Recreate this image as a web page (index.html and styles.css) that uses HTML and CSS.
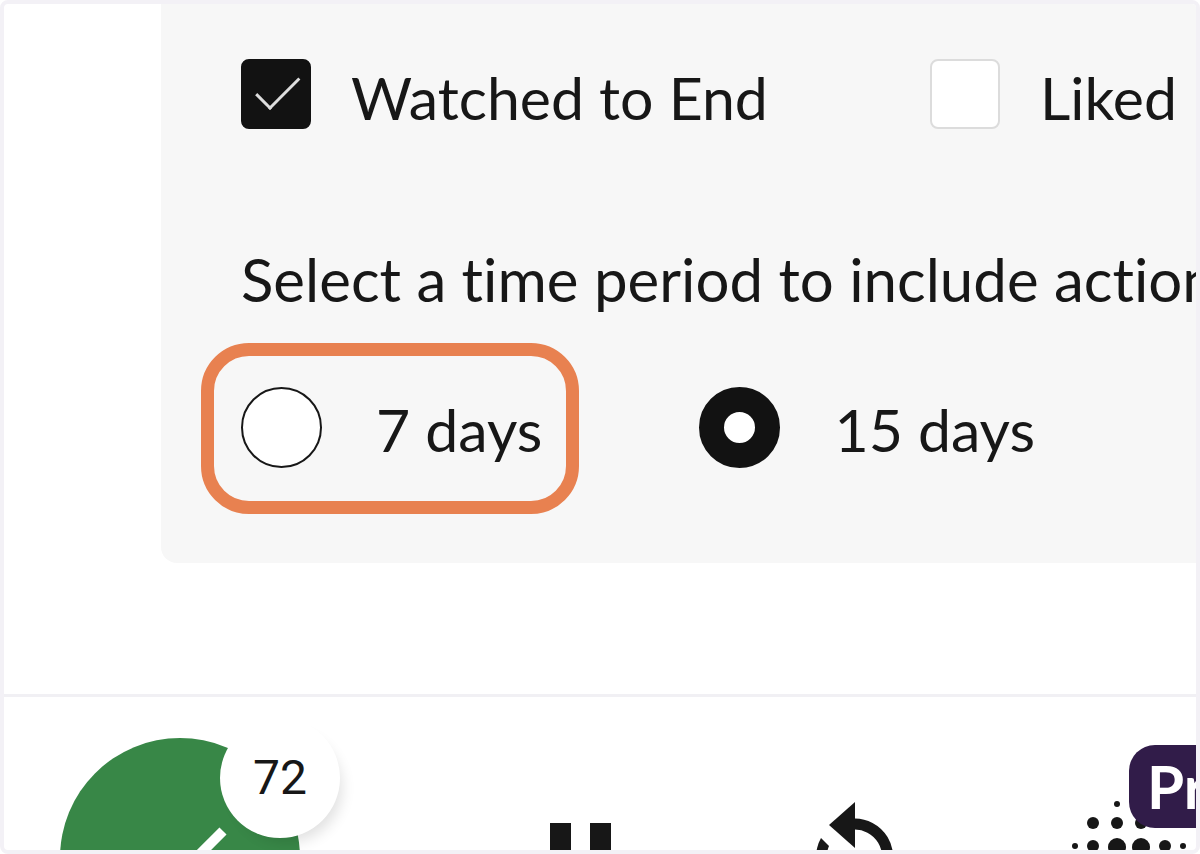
FILE: index.html
```html
<!doctype html>
<html lang="en">
<head>
  <meta charset="UTF-8">
  <meta name="viewport" content="width=device-width, initial-scale=1">
  <title>Time period</title>
  <link rel="stylesheet" href="styles.css">
</head>
<body>
  <div class="frame">
    <form class="panel">
      <div class="actions">
        <label class="option"><input type="checkbox" class="check" checked>Watched to End</label>
        <label class="option"><input type="checkbox" class="check">Liked</label>
      </div>
      <fieldset class="period">
        <legend>Select a time period to include action</legend>
        <div class="days">
          <label class="option day marked"><input type="radio" name="days" class="radio">7 days</label>
          <label class="option day"><input type="radio" name="days" class="radio" checked>15 days</label>
        </div>
      </fieldset>
    </form>

    <div class="toolbar">
      <button type="button" class="tool score">
        <svg viewBox="0 0 240 240">
          <path d="M163 93L105 151L80 126" fill="none" stroke="#fff" stroke-width="10"/>
        </svg>
        <span class="count">72</span>
      </button>
      <button type="button" class="tool">
        <svg viewBox="0 0 240 240">
          <path d="M90 85h21v70h-21zM130 85h21v70h-21z"/>
        </svg>
      </button>
      <button type="button" class="tool">
        <svg viewBox="0 0 240 240">
          <path d="M120 64v46L94 87z"/>
          <path d="M120 174v-46l26 23z"/>
          <path d="M118 86h2a33 33 0 0 1 29 48" fill="none" stroke="#171717" stroke-width="11"/>
          <path d="M86 100l8 8a28 28 0 0 0 26 39v11a39 39 0 0 1-34-58z"/>
        </svg>
      </button>
      <button type="button" class="tool">
        <svg viewBox="0 0 240 240">
          <circle cx="107" cy="66" r="3"/>
          <circle cx="131" cy="66" r="3"/>
          <circle cx="83" cy="85" r="6"/>
          <circle cx="107" cy="85" r="6"/>
          <circle cx="131" cy="85" r="6"/>
          <circle cx="65" cy="108" r="3"/>
          <circle cx="83" cy="108" r="6"/>
          <circle cx="107" cy="109" r="9"/>
          <circle cx="131" cy="109" r="9"/>
          <circle cx="155" cy="108" r="6"/>
          <circle cx="173" cy="108" r="3"/>
        </svg>
        <span class="pill">Pr</span>
      </button>
    </div>
  </div>
</body>
</html>
```

FILE: styles.css
```css
*{margin:0;
  padding:0;
  box-sizing:border-box;}
body{background:#fff;
     color:#171717;
     font-family:Lato, "Open Sans", sans-serif;
     font-size:59px;
     font-variant-ligatures:none;}
.frame{display:flex;
       flex-direction:column;
       height:100vh;
       overflow:hidden;
       border:4px solid #f3f1f6;
       border-radius:8px;
       background:#fff;}

/* options panel */
.panel{flex:none;
       margin:0 0 131px 157px;
       padding:55px 0 90px 80px;
       border-radius:0 0 0 16px;
       background:#f7f7f7;
       white-space:nowrap;}
.actions{display:flex;
         margin-bottom:103px;}
.option{display:flex;
        gap:40px;
        line-height:78px;}
.actions .option:first-child{flex:0 0 689px;}
.period{border:0;}
.period legend{font-size:60px;
               line-height:78px;
               margin-bottom:69px;}
.days{display:flex;
      gap:157px;}
.day{position:relative;
     gap:54px;
     line-height:86px;}
.check, .radio{appearance:none;
               flex:none;
               background:#fff;}
.check{position:relative;
       width:70px;
       height:70px;
       border:2px solid #dcdcdc;
       border-radius:8px;}
.check:checked{background:#121212;
               border-color:#121212;}
.check:checked::before{content:"";
                       position:absolute;
                       left:27px;
                       bottom:17px;
                       width:40px;
                       height:18px;
                       border:solid #ddd;
                       border-width:0 0 3px 3px;
                       transform:rotate(-45deg);
                       transform-origin:left bottom;}
.radio{width:81px;
       height:81px;
       border:2px solid #171717;
       border-radius:50%;}
.radio:checked{border:25px solid #121212;}
/* orange ring round the suggested choice */
.marked::after{content:"";
               position:absolute;
               top:-44px;
               right:-37px;
               bottom:-41px;
               left:-40px;
               border:13px solid #e88150;
               border-radius:48px;}

/* bottom bar */
.toolbar{display:flex;
         flex:1;
         gap:35px;
         min-height:0;
         padding:41px 0 0 56px;
         border-top:3px solid #f1f0f4;
         overflow:hidden;}
.tool{position:relative;
      flex:none;
      width:240px;
      height:240px;
      border:0;
      border-radius:50%;
      background:none;
      color:#171717;}
.tool svg{display:block;
          width:100%;
          fill:#171717;}
.score{margin-right:125px;
       background:#388747;}
.count{position:absolute;
       top:-20px;
       right:-40px;
       width:120px;
       height:120px;
       border-radius:50%;
       background:#fff;
       box-shadow:8px 10px 14px -6px rgba(0,0,0,.12);
       font:48px/120px Roboto, sans-serif;}
.pill{position:absolute;
      top:7px;
      left:119px;
      padding:0 18px;
      border-radius:26px;
      background:#311c49;
      color:#fff;
      font:bold 60px/83px Lato, sans-serif;}
```
